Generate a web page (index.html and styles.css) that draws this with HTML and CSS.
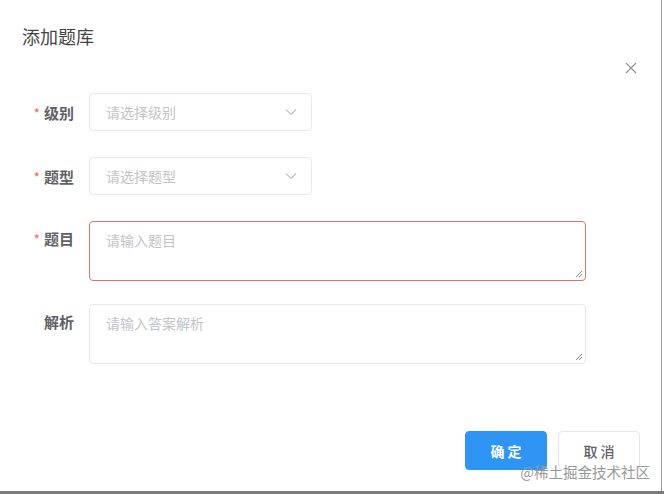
FILE: index.html
```html
<!DOCTYPE html>
<html lang="zh-CN">
<head>
<meta charset="utf-8">
<link rel="stylesheet" href="styles.css">
</head>
<body>
<div class="frame">
  <div class="dialog">
    <div class="header">
      <div class="title">添加题库</div>
    </div>
    <div class="close-row">
      <svg class="close" width="12" height="12" viewBox="0 0 12 12"><path d="M1 1L11 11M11 1L1 11" stroke="#909399" stroke-width="1.2" fill="none"/></svg>
    </div>
    <div class="form">
      <div class="row">
        <label class="label"><span class="star">*</span>级别</label>
        <div class="select"><span class="ph">请选择级别</span>
          <svg width="12" height="8" viewBox="0 0 12 8"><path d="M1 1.5L6 6.5L11 1.5" stroke="#c0c4cc" stroke-width="1.2" fill="none"/></svg>
        </div>
      </div>
      <div class="row">
        <label class="label"><span class="star">*</span>题型</label>
        <div class="select"><span class="ph">请选择题型</span>
          <svg width="12" height="8" viewBox="0 0 12 8"><path d="M1 1.5L6 6.5L11 1.5" stroke="#c0c4cc" stroke-width="1.2" fill="none"/></svg>
        </div>
      </div>
      <div class="row top">
        <label class="label"><span class="star">*</span>题目</label>
        <div class="textarea error"><span class="ph">请输入题目</span>
          <svg class="grip" width="8" height="8" viewBox="0 0 8 8"><path d="M1 7L7 1M4 7L7 4" stroke="#888" stroke-width="1" fill="none"/></svg>
        </div>
      </div>
      <div class="row top last">
        <label class="label">解析</label>
        <div class="textarea"><span class="ph">请输入答案解析</span>
          <svg class="grip" width="8" height="8" viewBox="0 0 8 8"><path d="M1 7L7 1M4 7L7 4" stroke="#888" stroke-width="1" fill="none"/></svg>
        </div>
      </div>
    </div>
    <div class="footer">
      <button class="btn primary">确 定</button>
      <button class="btn plain">取 消</button>
      <span class="watermark">@稀土掘金技术社区</span>
    </div>
  </div>
</div>
</body>
</html>
```
FILE: styles.css
```css
html, body {
  margin: 0;
  padding: 0;
  background: #ffffff;
}
body {
  font-family: "Noto Sans CJK SC", "Noto Sans", sans-serif;
  width: 664px;
  height: 494px;
  overflow: hidden;
}
.frame {
  width: 664px;
  height: 494px;
  box-sizing: border-box;
  border-bottom: 3px solid #7a7a7a;
  background: #fff;
}
.dialog {
  width: 662px;
  height: 491px;
  box-sizing: border-box;
  border-right: 1px solid #9a9a9a;
  position: relative;
}
.header {
  padding: 24px 0 0 22px;
  height: 30px;
}
.title {
  font-size: 18px;
  line-height: 24px;
  color: #444;
}
.close-row {
  display: flex;
  justify-content: flex-end;
  padding: 4px 24px 0 0;
  height: 35px;
}
.close {
  margin-top: 4px;
}
.form {
  display: flex;
  flex-direction: column;
  gap: 26px;
  padding-left: 20px;
}
.row {
  display: flex;
  align-items: center;
}
.row.top {
  align-items: flex-start;
}
.row.last {
  margin-top: -3px;
}
.label {
  width: 55px;
  box-sizing: border-box;
  padding-right: 1px;
  text-align: right;
  font-size: 15px;
  font-weight: bold;
  color: #5f6166;
  margin-right: 14px;
  white-space: nowrap;
}
.row.top .label {
  line-height: 36px;
}
.star {
  color: #f56c6c;
  margin-right: 4px;
  font-weight: normal;
  font-size: 14px;
}
.select {
  width: 223px;
  height: 38px;
  box-sizing: border-box;
  border: 1px solid #e6e8ec;
  border-radius: 4px;
  display: flex;
  align-items: center;
  justify-content: space-between;
  padding: 0 14px 0 16px;
}
.ph {
  color: #c0c4cc;
  font-size: 14px;
}
.textarea {
  width: 497px;
  height: 60px;
  box-sizing: border-box;
  border: 1px solid #e6e8ec;
  border-radius: 4px;
  padding: 5px 16px;
  position: relative;
}
.textarea.error {
  border-color: #e2726e;
  border-width: 1.5px;
}
.grip {
  position: absolute;
  right: 2px;
  bottom: 2px;
}
.footer {
  position: absolute;
  right: 21px;
  bottom: 21px;
  display: flex;
  gap: 11px;
}
.btn {
  width: 82px;
  height: 39px;
  border-radius: 4px;
  font-family: "Noto Sans CJK SC", sans-serif;
  font-size: 14px;
  cursor: pointer;
}
.btn.primary {
  background: #2f95f5;
  border: 1px solid #2f95f5;
  color: #fff;
  font-weight: bold;
}
.btn.plain {
  background: #fff;
  border: 1px solid #e4e7ed;
  color: #606266;
  font-weight: 500;
}
.watermark {
  position: absolute;
  right: -10px;
  bottom: -12px;
  font-size: 14.5px;
  color: #999;
  white-space: nowrap;
}
```
